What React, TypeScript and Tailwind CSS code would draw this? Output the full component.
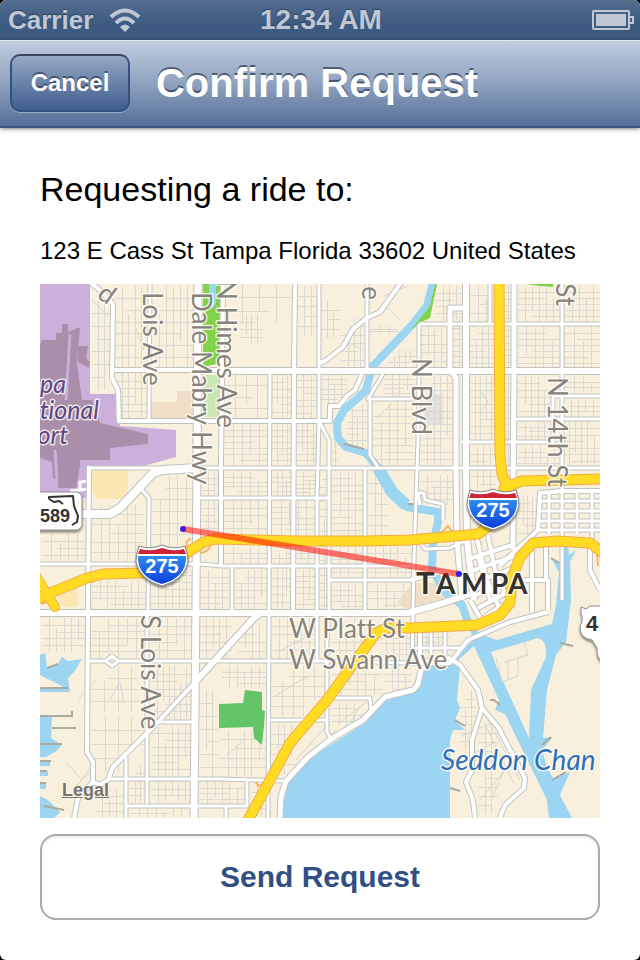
import React from "react";

type Road = { d: string; w: number };
type Block = [x: number, y: number, w: number, h: number, cols: number, rows: number];

const LAND = "#f8f0dc";
const WATER = "#9bd5f2";

/* Residential blocks, each cut into columns and rows of minor streets. */
const blocks: Block[] = [
  [92, 300, 18, 90, 2, 6], [115, 286, 33, 83, 4, 6], [152, 286, 42, 83, 5, 6],
  [115, 373, 33, 46, 4, 5], [225, 284, 68, 40, 3, 2], [240, 314, 22, 30, 3, 3],
  [298, 286, 19, 50, 2, 4], [320, 300, 20, 38, 2, 3], [342, 318, 24, 50, 3, 5],
  [370, 326, 28, 8, 2, 2], [224, 374, 44, 45, 3, 3], [272, 374, 20, 45, 3, 5],
  [296, 374, 22, 45, 2, 6], [321, 374, 26, 30, 3, 5], [388, 350, 28, 18, 4, 2],
  [224, 424, 44, 42, 4, 6], [272, 424, 20, 42, 3, 6], [296, 424, 22, 42, 3, 6],
  [332, 424, 6, 42, 1, 5], [347, 404, 20, 42, 3, 6], [373, 402, 40, 64, 4, 8],
  [384, 375, 30, 22, 3, 4], [436, 286, 26, 34, 3, 4], [421, 327, 26, 42, 3, 4],
  [453, 316, 11, 52, 1, 8], [470, 286, 24, 36, 2, 3], [470, 327, 24, 42, 3, 6],
  [504, 286, 7, 82, 1, 12], [518, 286, 42, 36, 5, 5], [518, 327, 42, 42, 4, 6],
  [565, 286, 35, 36, 4, 5], [565, 327, 35, 42, 3, 6], [421, 376, 32, 90, 4, 12],
  [470, 376, 26, 64, 4, 8], [504, 376, 8, 90, 1, 12], [518, 376, 33, 42, 4, 5],
  [565, 376, 35, 17, 3, 2], [518, 422, 33, 18, 4, 3], [556, 400, 44, 17, 5, 2],
  [556, 422, 44, 45, 6, 6], [470, 446, 26, 60, 3, 7], [518, 446, 43, 22, 5, 3],
  [92, 505, 52, 56, 5, 5], [42, 534, 44, 28, 4, 3], [152, 476, 42, 70, 4, 5],
  [202, 472, 18, 24, 2, 3], [202, 501, 18, 34, 2, 4], [224, 472, 43, 24, 4, 4],
  [272, 472, 19, 24, 3, 4], [296, 472, 20, 24, 2, 5], [320, 472, 8, 140, 1, 18],
  [224, 501, 43, 34, 4, 4], [272, 501, 43, 34, 4, 5], [332, 472, 31, 64, 3, 9],
  [368, 472, 20, 64, 2, 5], [224, 547, 43, 17, 4, 2], [272, 547, 43, 17, 5, 2],
  [332, 547, 31, 31, 3, 4], [368, 547, 44, 31, 5, 4], [92, 580, 54, 30, 6, 4],
  [151, 568, 42, 42, 5, 5], [201, 570, 28, 40, 3, 5], [235, 570, 32, 40, 4, 5],
  [272, 570, 19, 40, 3, 4], [296, 570, 20, 40, 2, 6], [332, 584, 31, 28, 3, 4],
  [368, 584, 44, 28, 4, 3], [42, 618, 43, 34, 5, 4], [90, 618, 55, 40, 5, 5],
  [151, 618, 41, 40, 4, 4], [200, 618, 32, 40, 4, 4], [238, 625, 28, 34, 3, 3],
  [272, 618, 44, 40, 5, 4], [332, 618, 36, 40, 4, 4], [90, 666, 55, 46, 3, 3],
  [92, 716, 52, 56, 3, 3], [151, 666, 41, 53, 6, 6], [200, 690, 18, 90, 2, 6],
  [222, 666, 44, 22, 5, 3], [220, 730, 47, 46, 5, 4], [271, 666, 54, 50, 4, 4],
  [271, 724, 26, 50, 3, 4], [332, 666, 50, 30, 5, 3], [332, 702, 36, 32, 4, 4],
  [385, 666, 26, 30, 3, 3], [151, 726, 41, 50, 5, 6], [130, 766, 15, 36, 2, 4],
  [151, 782, 41, 20, 5, 2], [200, 782, 44, 22, 5, 3], [130, 808, 60, 10, 6, 1],
  [252, 784, 14, 32, 2, 3], [95, 788, 28, 30, 3, 3], [460, 690, 16, 60, 2, 6],
  [478, 724, 20, 90, 2, 9], [420, 632, 30, 20, 4, 3], [518, 496, 18, 44, 3, 5],
  [380, 632, 32, 28, 4, 4], [420, 475, 34, 30, 4, 4],
];

const minorStreets = blocks
  .map(([x, y, w, h, cols, rows], n) => {
    let d = "";
    for (let c = 1; c <= cols; c++) {
      const px = Math.round(x + (w * c) / (cols + 1)) + 0.5;
      const cut = (n + c) % 3 === 0 ? Math.round(h / 3) : 0;
      d += `M${px} ${y + ((n + c) % 2 ? cut : 0)}V${y + h - ((n + c) % 2 ? 0 : cut)}`;
    }
    for (let r = 1; r <= rows; r++) {
      const py = Math.round(y + (h * r) / (rows + 1)) + 0.5;
      const cut = (n + r) % 3 === 0 ? Math.round(w / 3) : 0;
      d += `M${x + ((n + r) % 2 ? cut : 0)} ${py}H${x + w - ((n + r) % 2 ? 0 : cut)}`;
    }
    return d;
  })
  .join("");

const roads: Road[] = [
  { d: "M88 280L104 294L113 304L112 378L118 390L119 421H330V406H339L347 396L355 390L362 374", w: 4 },
  { d: "M150 284L149 421", w: 3 },
  { d: "M198 284L197 460L196 600L194 818", w: 7 },
  { d: "M223 284L221 460V566", w: 4 },
  { d: "M114 370H222", w: 4 },
  { d: "M222 371H600", w: 6 },
  { d: "M295 284L294 371L293 613", w: 4 },
  { d: "M319 284V421L317 500V660", w: 3 },
  { d: "M270 371L269 613L268 818", w: 3 },
  { d: "M319 421L329 440V614L327 640V732L332 740", w: 3 },
  { d: "M367 284V371M365 468V613", w: 3 },
  { d: "M403 280L380 312L367 318L353 329L343 347L325 361L319 363", w: 4 },
  { d: "M383 374L368 399H419M370 400L370 455L378 467", w: 3 },
  { d: "M89 468H160M190 468H600", w: 3 },
  { d: "M89 466L88 618L87 752L93 762V782L78 798L74 818", w: 4 },
  { d: "M199 498H329", w: 3 },
  { d: "M40 564H200L222 566H415", w: 3 },
  { d: "M329 580H415", w: 3 },
  { d: "M40 613H408L440 604L470 594", w: 6 },
  { d: "M232 566V611", w: 3 },
  { d: "M262 612L253 619L197 680L158 722L123 757L113 767L108 780L100 785L93 782", w: 4 },
  { d: "M262 612L253 619L197 680", w: 6 },
  { d: "M89 661H106M118 661H332L410 663", w: 3 },
  { d: "M106 661L112 656L118 661L112 666Z", w: 3 },
  { d: "M158 722H192M270 720H328", w: 3 },
  { d: "M108 779H220L286 781M126 757V818M147 613V804", w: 3 },
  { d: "M126 806H247V780M226 806V818", w: 3 },
  { d: "M142 490L149 498L148 613", w: 3 },
  { d: "M80 514H110L120 508L153 473L163 470L197 468", w: 8 },
  { d: "M280 818L281 797L286 781L308 757L331 739L363 720L385 697L413 690L418 684L421 670L432 662", w: 5 },
  { d: "M328 698H370L371 712", w: 3 },
  { d: "M432 662L420 660V630M447 657L460 665L478 690L482 708L472 740V770L466 782L473 800L475 818", w: 4 },
  { d: "M482 708L498 727L525 778L524 788L505 805L500 818", w: 4 },
  { d: "M410 663H450L468 640L510 622L548 612", w: 4 },
  { d: "M431 632V660M445 632V660M415 648H462", w: 3 },
  { d: "M419 324V371L418 440L416 500L414 560L412 660M419 324H600", w: 3 },
  { d: "M466 284V470L467 540L474 600", w: 6 },
  { d: "M466 308H450V370L456 378V470L457 540L462 600", w: 5 },
  { d: "M490 284V323", w: 3 },
  { d: "M514 284V371L513 500V550", w: 5 },
  { d: "M562 284V600M553 445V396H600M514 419H600M460 442H552", w: 3 },
  { d: "M600 491H562L540 493L538 530L513 553L500 566", w: 4 },
  { d: "M540 501H600M540 511H600M538 521H600M538 530H600M592 491V545M577 491V534M549 491V534", w: 3 },
  { d: "M420 505L418 493H424L425 500L443 504V520", w: 3 },
  { d: "M418 540L425 549L450 548L467 540", w: 3 },
  { d: "M476 535L487 580L500 610M488 535L496 575L506 595M466 560L512 545M468 572L515 556M471 584L514 568M474 596L512 580M478 608L508 592M483 618L504 604", w: 4 },
  { d: "M478 555L490 600M470 600L484 625M520 580H548V610M532 545V612M546 545V580", w: 4 },
  { d: "M410 580L440 572M590 545V570L600 590", w: 4 },
];

const highways: Road[] = [
  { d: "M499 280L500 455L502 474L508 488", w: 9 },
  { d: "M504 488L522 481L600 479", w: 9 },
  { d: "M508 488L494 522L478 534L410 540L366 541H300L215 539L204 542L188 552L162 571L140 573L103 574L87 578L50 593L36 600", w: 9 },
  { d: "M36 576L55 607", w: 8 },
  { d: "M604 554L590 543L557 541L533 543L520 557L513 575L510 603L500 615L477 625L410 628H386L376 633L327 700L290 743L270 780L247 822", w: 9 },
];

type LabelProps = {
  x: number;
  y: number;
  size?: number;
  rotate?: number;
  anchor?: "start" | "end";
  className?: string;
  children: React.ReactNode;
};

function Label({ x, y, size = 26, rotate = 0, anchor = "start", className = "fill-[#86837c]", children }: LabelProps) {
  return (
    <text
      transform={`translate(${x} ${y}) rotate(${rotate})`}
      fontSize={size}
      textAnchor={anchor}
      stroke="#fffdf6"
      strokeOpacity={0.8}
      strokeWidth={3}
      strokeLinejoin="round"
      paintOrder="stroke"
      className={className}
    >
      {children}
    </text>
  );
}

function InterstateShield({ x, y }: { x: number; y: number }) {
  return (
    <g transform={`translate(${x} ${y})`}>
      <path
        d="M-23 -19Q-12 -15 0 -20Q12 -15 23 -19Q26 -10 26 -3Q22 15 0 21Q-22 15 -26 -3Q-26 -10 -23 -19Z"
        fill="#fff" stroke="#858585" strokeWidth="1" filter="url(#drop)"
      />
      <path d="M-22 -16Q-11 -13 0 -17Q11 -13 22 -16L24 -11H-24Z" fill="#cf2438" />
      <path d="M-24 -9H24Q25 12 0 19Q-25 12 -24 -9Z" fill="url(#shieldBlue)" />
      <text y="8" textAnchor="middle" fontSize="20" className="fill-white font-['Liberation_Sans',sans-serif] font-bold">275</text>
    </g>
  );
}

function RideMap() {
  return (
    <svg
      viewBox="40 284 560 534"
      role="img"
      aria-label="Map of Tampa with the ride route"
      className="block w-full font-['Lato',sans-serif] [font-variant-ligatures:none]"
    >
      <defs>
        <linearGradient id="shieldBlue" x1="0" y1="0" x2="0" y2="1">
          <stop offset="0" stopColor="#2f8df0" />
          <stop offset="1" stopColor="#0b3ddc" />
        </linearGradient>
        <filter id="drop" x="-20%" y="-20%" width="140%" height="150%">
          <feDropShadow dx="0" dy="2" stdDeviation="1" floodOpacity="0.45" />
        </filter>
      </defs>
      <rect x="40" y="284" width="560" height="534" fill={LAND} />

      {/* Zones and parks */}
      <path d="M151 402H177V391H190L197 393V418H151Z" fill="#f0dfc6" />
      <path d="M95 470H128V490L122 499H98L92 492V472Z" fill="#fbe6b4" />
      <path d="M56 594L78 585V607H62Z" fill="#fbe6b4" />
      <path d="M397 603L412 583H452L457 596L412 612Z" fill="#f0dfc6" />
      <rect x="425" y="394" width="18" height="31" fill="#e3e0dd" />
      <path d="M203 284H221V363L203 367Z" fill="#80d348" />
      <path d="M209 284H216V304L212 309L209 302Z" fill={WATER} />
      <path d="M203 375H219V417H203Z" fill="#cae6b2" />
      <path d="M526 284H553V287L540 286Z" fill="#80d348" />

      {/* Airport */}
      <path d="M40 284H90V394H118L120 426L176 430V457L140 467L89 470V498H40Z" fill="#cbb0db" />
      <g fill="#a98fa9">
        <path d="M40 345L42 340H56V333H62V324H68V332L78 328H80L77 364L82 400H92L100 423L148 434V444L110 448V460H80V466L76 488H58V480L53 478L52 462L40 458Z" />
        <path d="M78 346H88L86 358L90 362L89 368L78 362Z" />
      </g>
      <path d="M70 334L66 400M55 450L57 482" stroke="#cbb0db" strokeWidth="3" />
      <path d="M70 491L88 489M80 489V482L89 481" stroke="#fff" strokeWidth="3" fill="none" />

      <path d={minorStreets} stroke="#d9d9d1" strokeWidth="1" fill="none" />

      {/* Diagonal residential lanes */}
      <path
        d="M225 650L240 638M278 652L312 634M275 696L308 676M338 724L366 702M345 732L360 706M296 760L330 722M304 764L336 730M92 300L108 316M136 328L144 350M226 756L244 740M66 762L82 780L90 768M72 790L96 766M78 700L96 680M110 700L120 682L124 704M462 736L494 722M460 760L496 742M480 800L512 762M484 722L514 784M488 720L520 780M492 798L504 770M384 296L408 286M384 304L400 320M346 342L364 350M376 418L392 404M482 392L488 402L482 410"
        stroke="#d6d6ce" strokeWidth="1" fill="none"
      />
      <path d="M219 704L243 703L245 690L262 692V710L265 711L264 726L262 745L254 738L253 727L219 728Z" fill="#63c568" />

      {/* River, bay and channels */}
      <path
        d="M436 272L427 306L413 324L372 367L366 390L358 398L344 410L337 423L338 438L346 447L366 453L380 470L392 495L407 507L420 509L438 512V522L433 543L432 567L443 590L462 605L470 628"
        stroke={WATER} strokeWidth="8" strokeLinejoin="round" fill="none"
      />
      <path d="M378 468L392 492L406 505" stroke={WATER} strokeWidth="12" fill="none" />
      <path d="M411 330L419 323L430 318L437 284H435L430 306Z" fill="#80d348" />
      <path d="M282 818L284 800L288 783L308 760L330 745L365 723L385 700L413 692L420 688L424 670L445 660L460 667L457 700L460 708L455 720L465 730L453 730L450 740V818Z" fill={WATER} />
      <path d="M452 658L474 640L466 620L480 634L497 640L552 624L556 605L559 572L551 558L560 562V543H568L569 555L576 550L570 562L571 600L566 642L556 655L547 690L543 738L553 737L542 750L547 768L553 778L570 772L560 795L572 818H549L547 800L505 714L495 710L499 700L474 646L456 662Z" fill={WATER} />
      <path d="M491 652L538 638Q547 640 546 657L531 690L529 738L497 668Z" fill={LAND} />
      <path d="M496 658L502 682L518 676V658L528 655L524 642M504 662L520 658M508 662V680" stroke="#d6d6ce" strokeWidth="1" fill="none" />
      <path d="M40 655L45 653L47 668L58 664L62 657L68 661L82 659L74 672L68 678L70 692L60 685L40 675Z" fill={WATER} />
      <path d="M40 688H66L70 692H40ZM40 716H52L51 738L62 745L55 752L46 757H40ZM40 761L50 762V766H40ZM40 771H48V776H40ZM40 784H46V789H40ZM40 796L48 800L60 812L54 818H40Z" fill={WATER} />
      <path
        d="M40 688H68M40 716H72V711M52 728H76M40 744H62M40 761H51M40 771H47M40 783H46M44 806L64 810M47 668L58 664M455 720L465 726M450 760L460 761M450 788L460 791M490 700H494L500 705M542 745L551 737M552 780L566 772M560 643L573 646M551 558L564 566M408 504H420M344 444L364 449"
        stroke="#a9aaa0" strokeWidth="2" fill="none"
      />

      {/* Arterial roads */}
      <g fill="none" strokeLinejoin="round">
        {roads.map((r, i) => (
          <path key={i} d={r.d} stroke="#bfc3c0" strokeWidth={r.w + 2} />
        ))}
        {roads.map((r, i) => (
          <path key={i} d={r.d} stroke="#fff" strokeWidth={r.w} />
        ))}
      </g>

      {/* Ramps and highways */}
      <path d="M188 548Q184 540 191 539M200 553Q210 552 211 543M445 543L442 532L448 526L454 534L446 541M92 583V577M256 782L258 786L264 784M42 604L50 600M597 552L598 566" stroke="#f6b560" strokeWidth="2" fill="none" />
      <g fill="none" strokeLinejoin="round" strokeLinecap="round">
        {highways.map((r, i) => (
          <path key={i} d={r.d} stroke="#f3ab43" strokeWidth={r.w + 2} />
        ))}
        {highways.map((r, i) => (
          <path key={i} d={r.d} stroke="#ffdb24" strokeWidth={r.w} />
        ))}
      </g>

      {/* Street names */}
      <Label x={96} y={297} rotate={35}>d</Label>
      <Label x={143} y={292} rotate={90}>Lois Ave</Label>
      <Label x={192} y={292} rotate={90}>Dale Mabry Hwy</Label>
      <Label x={217} y={428} rotate={90} anchor="end">N Himes Ave</Label>
      <Label x={362} y={300} rotate={90} anchor="end">e</Label>
      <Label x={412} y={358} rotate={90}>N Blvd</Label>
      <Label x={556} y={306} rotate={90} anchor="end">St</Label>
      <Label x={548} y={377} rotate={90}>N 14th St</Label>
      <Label x={141} y={615} rotate={90}>S Lois Ave</Label>
      <Label x={289} y={638}>W Platt St</Label>
      <Label x={289} y={669}>W Swann Ave</Label>
      <g className="italic">
        <Label x={66} y={393} size={25} anchor="end" className="fill-[#5f4683]">pa</Label>
        <Label x={99} y={419} size={25} anchor="end" className="fill-[#5f4683]">tional</Label>
        <Label x={68} y={444} size={25} anchor="end" className="fill-[#5f4683]">ort</Label>
        <Label x={441} y={770} size={28} className="fill-[#2f6fb7]">Seddon Chan</Label>
      </g>

      {/* State route 589 */}
      <rect x="20" y="492" width="62" height="38" rx="6" fill="#fff" stroke="#8c8c8c" filter="url(#drop)" />
      <text x="40" y="522" fontSize="18" className="fill-[#333] font-['Liberation_Sans',sans-serif] font-bold">589</text>
      <path d="M49 499L54 502L59 501L63 504M49 499V497L73 496L74 506L78 516L77 522L72 525" stroke="#333" strokeWidth="2" fill="none" strokeLinejoin="round" />

      {/* US route marker at the right edge */}
      <path d="M604 606H590L586 609L581 607V613Q584 620 580 626Q579 638 592 640L597 648Q596 658 604 664Z" fill="#fff" stroke="#8c8c8c" filter="url(#drop)" />
      <text x="586" y="631" fontSize="22" className="fill-[#333] font-['Liberation_Sans',sans-serif] font-bold">4</text>

      <InterstateShield x={162} y={565} />
      <InterstateShield x={493} y={509} />

      <g className="fill-[#33322f] font-bold" stroke="#fffdf6" strokeWidth="3" strokeOpacity="0.8" paintOrder="stroke">
        <text y="594" x="416" fontSize="31">T</text>
        <text y="594" x="436 461 491 508" fontSize="28">AMPA</text>
      </g>

      {/* Route */}
      <path d="M183 529L459 574" stroke="#ff0000" strokeOpacity="0.53" strokeWidth="6" />
      <circle cx="183" cy="529" r="3" fill="#3a20dc" />
      <circle cx="459" cy="574" r="3" fill="#3a20dc" />
    </svg>
  );
}

function StatusBar() {
  return (
    <div className="grid h-10 grid-cols-3 items-center bg-linear-to-b from-[#556e90] to-[#3d5a80] to-60% pr-1.5 pl-2 font-bold text-[#bfc8d4] [text-shadow:0_-1px_1px_rgba(30,50,80,0.7)]">
      <div className="flex items-center gap-4">
        <span className="text-[26px] leading-10">Carrier</span>
        <svg viewBox="0 0 32 24" className="h-6 w-8" role="img" aria-label="Wi-Fi">
          <g fill="none" stroke="#bfc8d4" strokeWidth="4">
            <path d="M2 9Q16 -4 30 9" />
            <path d="M7 15Q16 6 25 15" />
          </g>
          <path d="M11 19Q16 14 21 19L16 24Z" fill="#bfc8d4" />
        </svg>
      </div>
      <span className="text-center text-[28px] leading-10">12:34 AM</span>
      <svg viewBox="0 0 42 20" className="h-5 w-[42px] justify-self-end" role="img" aria-label="Battery full">
        <rect x="1" y="1" width="36" height="18" rx="1" fill="none" stroke="#bfc8d4" strokeWidth="2" />
        <rect x="4" y="4" width="30" height="12" fill="#bfc8d4" />
        <path d="M38 7H41V13H38" fill="none" stroke="#bfc8d4" strokeWidth="2" />
      </svg>
    </div>
  );
}

export default function App() {
  return (
    <div className="min-h-screen bg-black font-['Liberation_Sans',Arial,sans-serif]">
      <div className="flex min-h-screen flex-col overflow-hidden rounded-md bg-white">
        <StatusBar />
        <header className="grid h-22 grid-cols-[120px_1fr_126px] items-center border-t border-b-2 border-t-[#e6ecf3] border-b-[#3a5680] bg-linear-to-b from-[#c0cddd] via-[#8fa2c0] to-[#546f97] px-[10px] pb-0.5 shadow-[0_1px_4px_rgba(0,0,0,0.5)]">
          <button
            type="button"
            className="h-[58px] rounded-[10px] border-2 border-[#34517d] border-t-[#3a4558] bg-linear-to-b from-[#97a8c3] to-[#3e5f8e] text-2xl font-bold text-white shadow-[0_1px_0_rgba(255,255,255,0.35)] [text-shadow:0_-2px_0_rgba(30,45,70,0.6)]"
          >
            Cancel
          </button>
          <h1 className="text-center text-[40px] leading-12 font-bold whitespace-nowrap text-white [text-shadow:0_-2px_0_rgba(40,55,80,0.7)]">
            Confirm Request
          </h1>
        </header>
        <main className="flex flex-col px-10 pt-[39px] pb-10">
          <h2 className="text-[34px] leading-11 text-black">Requesting a ride to:</h2>
          <p className="mt-6 text-2xl leading-8 text-black">123 E Cass St Tampa Florida 33602 United States</p>
          <div className="relative mt-[17px] overflow-hidden">
            <RideMap />
            <a href="#legal" className="absolute bottom-4 left-[22px] text-lg leading-6 font-bold text-[#77746d] underline [text-shadow:0_0_2px_#fff]">
              Legal
            </a>
          </div>
          <button
            type="button"
            className="mt-4 h-[86px] rounded-2xl border-2 border-[#ababab] bg-white text-3xl font-bold text-[#324f85] shadow-[inset_0_2px_2px_rgba(0,0,0,0.08)]"
          >
            Send Request
          </button>
        </main>
      </div>
    </div>
  );
}
